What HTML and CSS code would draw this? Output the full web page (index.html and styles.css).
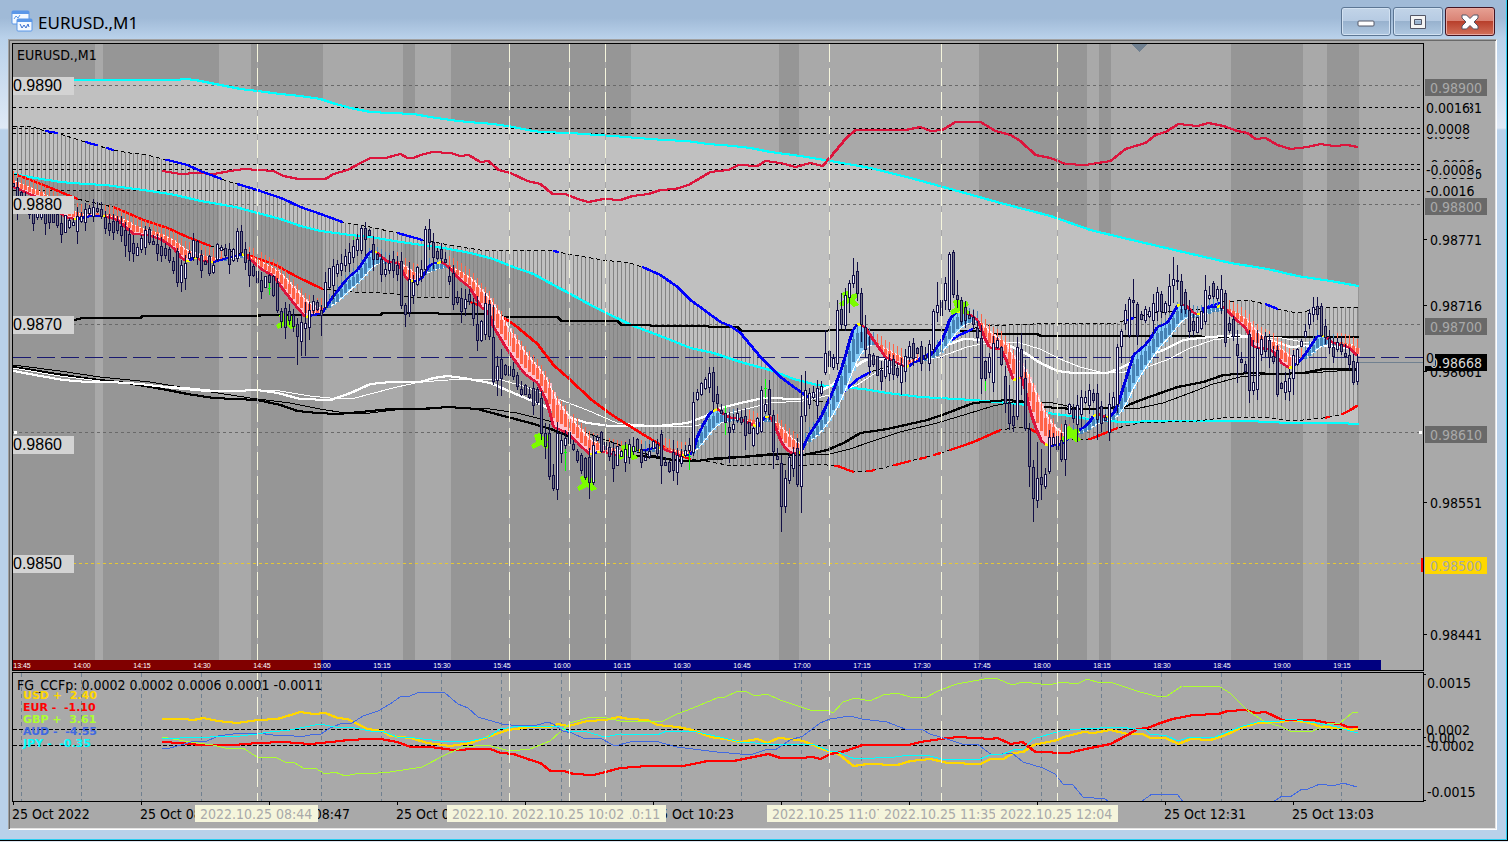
FILE: index.html
```html
<!DOCTYPE html>
<html lang="en">

<head>
    <meta charset="UTF-8">
    <meta name="viewport" content="width=device-width, initial-scale=1.0">
    <title>EURUSD.,M1</title>
    <link rel="stylesheet" href="styles.css">
</head>

<body>
    <main class="window">
        <header class="titlebar">
            <svg class="app-icon" width="22" height="22" viewBox="0 0 22 22">
                <rect x="1" y="1" width="17" height="13" rx="1" fill="#f4f9ff" stroke="#5b97e8" />
                <path d="M1 2.500h17" stroke="#5b97e8" stroke-width="3" />
                <path d="M3 9l2-3 2 2 2-3" fill="none" stroke="#5b97e8" />
                <rect x="6" y="9" width="15" height="12" rx="1" fill="#f4f9ff" stroke="#5b97e8" />
                <path d="M6 10.500h15" stroke="#5b97e8" stroke-width="3" />
                <path d="M9 14l2 4 2-3 2 3 2-4 1 3" fill="none" stroke="#3a6fd0" />
            </svg>
            <h1>EURUSD.,M1</h1>
            <div class="controls">
                <button type="button" class="btn" aria-label="Minimize">
                    <svg width="18" height="18" viewBox="0 0 18 18">
                        <rect x="1" y="8" width="16" height="5" rx="1" fill="#fff" stroke="#535666" />
                    </svg>
                </button>
                <button type="button" class="btn" aria-label="Maximize">
                    <svg width="18" height="18" viewBox="0 0 18 18">
                        <path d="M1.500 2.500h15v13h-15zM5.500 6.500v5h7v-5z" fill="#f4f4f4" fill-rule="evenodd" stroke="#535666" />
                    </svg>
                </button>
                <button type="button" class="btn close" aria-label="Close">
                    <svg width="18" height="18" viewBox="0 0 18 18">
                        <path d="M1 2h4.500L9 5.500 12.500 2H17v3L13 9l4 4v3h-4.500L9 12.500 5.500 16H1v-3l4-4-4-4z" fill="#fff" stroke="#535666" />
                    </svg>
                </button>
            </div>
        </header>

        <section class="client">
            <div class="plot price-plot">
                <svg id="price"></svg>
                <p class="caption">EURUSD.,M1</p>
            </div>
            <svg class="scale" id="price-scale"></svg>

            <div class="plot ccfp-plot">
                <svg id="ccfp"></svg>
                <p class="caption">FG_CCFp: 0.0002 0.0002 0.0006 0.0001 -0.0011</p>
                <ul class="legend">
                    <li class="usd">USD +  2.40</li>
                    <li class="eur">EUR -  -1.10</li>
                    <li class="gbp">GBP +  3.61</li>
                    <li class="aud">AUD -  -4.55</li>
                    <li class="jpy">JPY -  -0.35</li>
                </ul>
            </div>
            <svg class="scale" id="ccfp-scale"></svg>

            <svg class="dates" id="dates"></svg>
        </section>
    </main>
    <script src="chart.js"></script>
</body>

</html>
```
FILE: styles.css
```css
* {
    box-sizing: border-box;
}

body {
    margin: 0;
    padding-bottom: 1px;
    background: #dce6f2;
    font: 14px/16px "DejaVu Sans Condensed", "Noto Sans", sans-serif;
    color: #000;
}

.window {
    display: flex;
    flex-direction: column;
    min-height: calc(100vh - 1px);
    border: solid #000;
    border-width: 0 1px 1px 0;
    box-shadow: inset -1px -1px #2ccdf0;
    background: linear-gradient(#a0bad7 0, #a0bad7 18px, #b9d1ea 38px, #dfe9f6 128px, #b9d1ea 130px);
}

.titlebar {
    display: flex;
    align-items: center;
    height: 39px;
    padding: 0 12px 0 11px;
}

.titlebar h1 {
    flex: 1;
    margin: 0 0 0 5px;
    padding-top: 6px;
    font: 17px/24px "Noto Sans", sans-serif;
}

.app-icon {
    margin-top: 2px;
}

.controls {
    display: flex;
    gap: 2px;
    margin-top: 4px;
}

.btn {
    display: grid;
    place-items: center;
    width: 50px;
    height: 29px;
    padding: 0;
    border: 1px solid #5c7694;
    border-radius: 3px;
    box-shadow: inset 0 0 0 1px #d3e2f2;
    background: linear-gradient(#c2d4e8 0, #b5cae2 50%, #98b2ce 50%, #b0c8e1 100%);
}

.btn.close {
    border-color: #431422;
    box-shadow: inset 0 0 0 1px #e9a79f;
    background: linear-gradient(#e6a093 0, #d98274 48%, #b8402c 50%, #d2705a 100%);
}

/* sunken frame round both charts */
.client {
    flex: 1;
    display: grid;
    grid-template-columns: 1fr 71px;
    grid-template-rows: minmax(628px, 1fr) 130px 26px;
    margin: 0 10px 10px 8px;
    padding: 3px 1px 1px 3px;
    border: 1px solid;
    border-color: #a0a0a0 #fff #fff #a0a0a0;
    box-shadow: inset 1px 1px #696969, inset -1px -1px #e3e3e3;
    background: #a9a9a9;
}

.client svg {
    display: block;
    width: 100%;
    height: 100%;
    overflow: hidden;
    shape-rendering: crispEdges;
}

.plot {
    position: relative;
    min-width: 0;
    border: 1px solid #000;
}

.price-plot {
    margin-bottom: 1px;
}

.plot svg {
    position: absolute;
    top: 0;
    left: 0;
}

.caption {
    position: relative;
    margin: 4px 0 0 4px;
}

.price-plot .caption {
    margin-top: 3px;
}

.legend {
    position: absolute;
    top: 17px;
    left: 10px;
    margin: 0;
    padding: 0;
    list-style: none;
    font: 900 11px/12px "DejaVu Sans", sans-serif;
}

.legend li {
    white-space: pre;
}

.usd { color: #ffd700; }
.eur { color: #f00; }
.gbp { color: #adff2f; }
.aud { color: #4169e1; }
.jpy { color: #0ff; }

.client .dates {
    grid-column: 1 / 3;
}

.level {
    font: 16px "Liberation Sans", sans-serif;
}

.clock {
    font: 7px "Liberation Sans", sans-serif;
    fill: #fff;
    text-anchor: middle;
}
```
FILE: chart.js
```js
const NS = 'http://www.w3.org/2000/svg'

function add(parent, tag, attrs, text) {
    const el = document.createElementNS(NS, tag)
    for (const k in attrs) el.setAttribute(k, attrs[k])
    if (text) el.textContent = text
    parent.appendChild(el)
    return el
}

// all series are stored in window pixels, each panel shifts them to its own corner
function panel(id, x, y) {
    return add(document.getElementById(id), 'g', { transform: `translate(${-x},${-y})` })
}

function pairs(str) {
    return str.trim().split(/\s+/).map(p => p.split(',').map(Number))
}

function at(pts, x) {
    if (x <= pts[0][0]) return pts[0][1]
    for (let i = 1; i < pts.length; i++) {
        const [x0, y0] = pts[i - 1], [x1, y1] = pts[i]
        if (x <= x1) return y0 + (y1 - y0) * (x - x0) / (x1 - x0 || 1)
    }
    return pts[pts.length - 1][1]
}

function line(g, pts, color, width, dash) {
    const a = { points: pts.map(p => p.join()).join(' '), fill: 'none', stroke: color, 'stroke-width': width }
    if (dash) a['stroke-dasharray'] = dash
    add(g, 'polyline', a)
}

// two pixel square pen: second pass one pixel to the right keeps slopes as heavy as flats
function thick(g, pts, color) {
    line(g, pts, color, 2)
    line(g, pts.map(p => [p[0] + 1, p[1]]), color, 2)
}

function part(pts, x0, x1) {
    return [[x0, at(pts, x0)], ...pts.filter(p => p[0] > x0 && p[0] < x1), [x1, at(pts, x1)]]
}

function rect(g, x, y, w, h, fill) {
    add(g, 'rect', { x, y, width: w, height: h, fill })
}

function hline(g, y, color, dash) {
    line(g, [[13, y + .5], [4000, y + .5]], color, 1, dash)
}

const separators = [257, 509, 569, 605, 829, 941, 1057]

/* ---------- price chart ---------- */

const cyanTop = pairs('13,80 175,80 185,79 195,80 205,82 220,85 240,89 257,91 280,94 300,96 320,99 335,104 350,108 370,112 390,113 413,114 430,117 450,120 467,122 493,124 513,127 527,130 540,132 570,133 597,135 613,136 637,138 663,140 687,141 707,144 733,146 750,148 770,152 800,156 830,161 870,168 910,178 950,189 1000,203 1050,216 1090,230 1123,238 1157,246 1187,253 1230,263 1267,269 1297,276 1330,281 1358,286')
const cyanLow = pairs('13,174 35,178 60,182 85,184 105,185 120,187 150,191 175,195 200,201 235,207 257,213 280,219 300,226 320,231 350,235 370,237 400,242 443,248 470,253 493,259 510,266 533,274 553,285 570,294 590,305 610,315 633,326 660,336 690,348 713,353 740,362 773,371 793,379 817,385 840,387 863,389 887,393 920,397 973,400 997,402 1027,405 1047,413 1070,416 1093,420 1123,422 1160,421 1247,421 1290,423 1337,423 1358,424')
const bandUp = pairs('13,126 30,126 45,131 57,133 85,142 113,150 130,153 147,155 167,160 187,165 200,171 213,176 230,182 257,190 283,199 300,207 320,214 342,222 370,227 397,233 422,240 450,245 467,248 487,251 510,250 553,251 573,255 603,260 630,263 642,267 660,275 677,287 690,300 720,322 730,326 740,333 760,357 780,377 807,397 817,402 833,401 857,379 870,372 887,367 913,362 940,348 957,336 970,330 980,326 1033,324 1117,323 1133,318 1153,313 1200,309 1223,302 1247,300 1265,304 1277,309 1297,313 1323,308 1347,307 1359,307')
const bandDn = pairs('13,174 17,175 43,185 77,199 113,207 143,220 167,228 187,237 210,246 227,251 247,255 273,264 297,277 322,289 353,292 380,293 397,294 408,297 457,297 470,302 490,310 513,324 537,344 553,365 570,380 590,399 610,414 637,431 660,445 677,455 690,459 710,462 733,466 773,464 803,466 817,464 837,466 853,472 870,471 887,467 910,461 927,457 947,451 973,442 1000,430 1020,427 1030,429 1045,438 1060,439 1090,439 1117,428 1140,423 1197,421 1230,417 1263,417 1293,421 1323,418 1340,415 1350,410 1359,404')
const flat = pairs('74,320 82,318 140,318 142,316 380,315 382,313 437,313 439,314 493,314 503,317 557,317 561,321 617,321 621,325 678,326 737,327 741,331 917,330 980,331 988,334 1037,334 1040,336 1358,337')
const whiteBold = pairs('13,371 40,376 63,380 87,382 110,382 140,384 173,388 207,391 233,391 257,390 277,393 300,399 330,400 350,393 370,384 390,382 420,382 433,378 447,376 463,378 490,383 513,393 537,403 567,417 587,423 610,426 657,426 687,423 703,417 720,408 740,403 763,398 800,399 817,392 830,386 850,370 863,361 873,358 887,360 907,362 927,356 947,345 963,339 983,340 1007,345 1023,352 1040,363 1057,371 1073,373 1107,373 1120,368 1140,358 1163,350 1183,340 1210,337 1237,335 1270,340 1290,347 1317,345 1353,349')
const whiteThin = pairs('13,368 60,376 100,381 150,385 190,388 210,390 280,391 310,396 330,398 355,398 370,394 397,387 420,382 463,379 497,379 520,385 553,397 587,410 617,423 657,426 690,427 703,424 730,413 770,403 803,401 830,395 857,385 880,370 907,363 940,357 967,347 993,342 1020,343 1040,349 1060,359 1080,367 1100,372 1120,373 1147,367 1167,360 1190,348 1213,340 1237,337 1277,337 1303,342 1353,345')
const blackBold = pairs('13,367 50,373 90,379 127,383 167,390 187,394 213,398 257,400 280,405 297,411 317,413 337,414 360,412 390,409 423,409 447,407 477,409 503,416 530,423 553,430 577,440 603,449 623,455 653,457 680,461 697,461 717,458 740,457 773,454 803,455 827,450 843,443 860,433 887,429 927,420 947,413 973,403 1007,400 1027,402 1043,407 1073,409 1120,408 1143,399 1177,387 1203,382 1223,375 1250,373 1277,374 1303,373 1323,369 1357,369')
const blackThin = pairs('13,365 60,371 100,377 150,382 180,387 205,391 250,398 290,403 320,409 345,413 370,413 403,409 450,407 490,409 517,413 557,423 587,433 617,444 637,452 670,459 690,461 723,459 777,455 830,454 850,449 873,441 900,432 937,423 967,414 993,406 1013,402 1053,403 1077,408 1140,408 1163,403 1190,393 1213,384 1240,377 1270,374 1310,373 1337,371 1359,370')
const crimson = pairs('162,171 180,174 197,173 213,174 230,171 243,169 273,171 283,176 298,179 325,179 333,174 347,170 360,163 370,158 385,158 400,154 407,158 413,158 420,155 432,152 450,153 460,156 468,155 480,162 488,161 498,170 510,173 527,181 540,184 552,194 565,194 577,199 588,202 603,199 620,200 632,196 648,194 660,190 675,189 688,185 710,172 728,170 738,165 757,166 765,161 780,163 795,167 810,163 822,166 830,157 845,139 855,130 905,130 920,127 930,131 942,130 955,122 980,122 995,131 1010,135 1020,141 1035,155 1050,158 1065,164 1085,165 1110,161 1125,149 1145,143 1155,135 1165,132 1178,124 1197,126 1208,123 1223,126 1237,131 1247,133 1255,139 1265,138 1277,145 1290,149 1307,147 1320,144 1333,146 1347,145 1357,147')
const fast = pairs('13,187 27,193 40,199 53,209 67,218 77,219 90,216 103,216 117,220 133,234 147,235 160,239 172,247 182,259 187,262 195,256 200,261 213,262 227,258 242,254 247,257 262,270 273,276 283,290 297,308 305,317 322,313 330,300 347,278 357,270 370,251 375,251 387,262 398,263 405,277 410,282 420,280 430,264 442,262 448,267 460,280 470,288 480,307 488,312 493,327 507,350 523,373 537,383 547,403 553,427 567,433 577,443 590,455 600,451 620,456 630,448 640,451 658,447 670,452 683,456 692,454 698,433 710,412 717,409 727,417 740,419 757,427 767,414 773,422 782,445 790,453 800,454 807,437 820,418 833,390 843,363 852,330 858,323 865,328 873,340 885,357 907,368 912,363 930,356 943,338 950,317 958,311 967,313 977,320 988,347 1002,350 1013,380 1022,377 1030,413 1040,440 1047,446 1060,445 1068,438 1077,431 1087,425 1095,413 1107,418 1115,412 1122,390 1133,355 1147,343 1157,327 1167,323 1178,304 1185,305 1193,313 1200,315 1205,308 1222,306 1233,317 1247,330 1253,347 1272,350 1280,362 1290,369 1302,358 1317,336 1323,335 1333,343 1348,347 1358,357')
const closes = pairs('13,188 20,197 27,205 33,215 45,214 55,220 62,228 70,226 80,220 90,211 100,209 106,225 120,226 127,240 137,252 147,236 155,245 163,250 170,258 177,277 184,272 190,254 195,245 200,262 213,270 218,250 225,252 232,260 240,238 247,262 255,277 263,287 270,280 277,300 283,318 290,315 297,328 303,331 308,320 313,305 320,310 325,286 333,275 343,262 352,253 360,240 368,232 373,250 378,262 384,272 392,262 398,268 403,300 407,315 411,292 418,276 424,264 427,240 432,245 437,256 443,252 448,272 453,296 462,303 470,297 477,330 483,335 488,312 493,370 500,365 507,375 513,372 520,390 530,395 538,398 543,425 548,455 553,470 558,460 562,440 570,440 578,460 585,470 590,465 595,440 605,447 615,460 625,455 635,444 643,460 655,445 662,460 670,470 680,460 690,445 695,400 703,388 710,380 715,390 722,415 730,430 738,415 746,425 753,440 760,420 768,400 775,440 780,480 785,490 790,460 797,460 801,450 805,405 812,395 820,395 827,360 835,365 840,315 848,300 855,275 860,300 866,340 872,360 880,375 890,365 900,375 910,350 920,355 930,355 935,315 942,308 949,270 954,280 960,305 966,315 973,320 980,340 985,372 993,360 998,342 1003,370 1010,405 1018,390 1022,360 1026,420 1031,480 1036,490 1042,475 1048,450 1054,440 1061,440 1067,410 1075,415 1084,400 1092,395 1098,410 1105,420 1112,410 1117,370 1124,320 1132,295 1140,318 1150,315 1158,300 1165,310 1173,285 1180,283 1187,310 1195,330 1203,320 1210,290 1217,295 1222,290 1227,325 1235,330 1241,360 1252,385 1258,350 1265,345 1272,350 1278,390 1285,385 1292,380 1298,355 1306,330 1313,305 1320,310 1326,335 1333,350 1340,345 1350,360 1357,380')

// bars with known extremes: x, high, body top, body bottom, low, rising
const known = [
    [133, 235, 243, 254, 262, 0], [137, 243, 247, 256, 255, 1], [177, 248, 251, 283, 287, 0], [193, 233, 240, 258, 261, 1], [197, 240, 241, 258, 265, 0],
    [237, 228, 231, 259, 262, 1], [241, 225, 231, 253, 256, 0], [277, 278, 283, 311, 313, 0], [281, 308, 311, 322, 328, 0],
    [297, 318, 324, 337, 365, 0], [305, 302, 323, 329, 356, 1], [321, 305, 310, 316, 336, 0], [325, 272, 282, 308, 309, 1],
    [361, 225, 228, 251, 254, 1], [365, 222, 228, 240, 256, 0], [401, 252, 261, 306, 309, 0], [405, 303, 305, 315, 327, 0], [409, 262, 279, 313, 317, 1],
    [425, 226, 229, 270, 275, 1], [429, 219, 229, 243, 250, 0], [453, 265, 273, 305, 310, 0], [477, 296, 324, 341, 351, 0],
    [485, 293, 303, 335, 340, 1], [489, 300, 304, 337, 340, 0], [493, 305, 337, 382, 385, 0], [497, 356, 366, 381, 396, 1],
    [541, 391, 398, 434, 440, 0], [549, 424, 433, 477, 480, 0], [553, 464, 475, 489, 491, 0], [557, 422, 433, 490, 500, 1],
    [589, 448, 457, 483, 499, 0], [593, 435, 445, 483, 485, 1], [661, 430, 434, 466, 484, 0], [673, 440, 452, 471, 481, 0],
    [693, 392, 402, 453, 456, 1], [709, 367, 373, 388, 393, 1], [713, 367, 372, 402, 410, 0], [729, 412, 427, 433, 463, 0],
    [761, 386, 390, 432, 433, 1], [769, 380, 389, 415, 420, 0], [773, 410, 415, 452, 469, 0], [781, 455, 463, 507, 532, 0],
    [785, 470, 478, 507, 513, 1], [789, 453, 457, 481, 484, 1], [797, 438, 448, 485, 487, 0], [801, 375, 416, 487, 513, 1],
    [805, 371, 390, 416, 422, 1], [825, 330, 353, 373, 375, 1], [837, 300, 310, 364, 370, 1], [841, 293, 309, 325, 329, 0],
    [845, 288, 295, 326, 331, 1], [849, 280, 283, 298, 313, 1], [853, 258, 275, 284, 288, 1], [857, 262, 271, 294, 301, 0],
    [861, 288, 293, 325, 342, 0], [865, 315, 327, 350, 358, 0], [869, 336, 354, 367, 375, 0], [933, 309, 311, 350, 354, 1],
    [937, 282, 305, 313, 322, 1], [949, 252, 254, 310, 312, 1], [953, 250, 252, 295, 298, 0], [957, 280, 295, 300, 308, 0],
    [961, 297, 300, 322, 325, 0], [981, 325, 338, 379, 394, 0], [993, 336, 343, 383, 392, 1], [1005, 366, 376, 404, 413, 0],
    [1009, 385, 403, 424, 430, 0], [1013, 404, 416, 426, 432, 0], [1017, 337, 347, 417, 420, 1], [1021, 333, 349, 377, 395, 0],
    [1025, 360, 378, 429, 431, 0], [1029, 423, 429, 467, 487, 0], [1033, 460, 467, 499, 522, 0], [1037, 442, 478, 501, 508, 1],
    [1041, 449, 477, 485, 500, 0], [1045, 468, 474, 487, 489, 1], [1049, 430, 437, 472, 474, 1], [1061, 433, 440, 460, 462, 0],
    [1065, 420, 424, 460, 476, 1], [1097, 384, 393, 420, 440, 0], [1109, 393, 404, 433, 441, 1], [1117, 344, 347, 405, 413, 1],
    [1121, 329, 331, 347, 363, 1], [1129, 297, 299, 336, 338, 1], [1133, 279, 300, 303, 317, 0], [1137, 302, 304, 336, 345, 0],
    [1169, 274, 286, 306, 313, 1], [1173, 257, 279, 286, 303, 1], [1177, 265, 280, 282, 290, 0], [1181, 274, 281, 306, 313, 0],
    [1189, 300, 310, 332, 338, 0], [1205, 275, 290, 322, 325, 1], [1221, 275, 289, 309, 314, 1], [1225, 290, 293, 343, 347, 0],
    [1237, 330, 344, 356, 383, 0], [1249, 330, 334, 391, 403, 0], [1253, 340, 382, 391, 395, 1], [1257, 330, 348, 390, 400, 1],
    [1277, 345, 350, 395, 397, 0], [1293, 350, 355, 379, 395, 1], [1313, 297, 307, 315, 322, 1], [1317, 297, 306, 315, 320, 0],
    [1321, 303, 306, 336, 337, 0], [1353, 354, 361, 383, 385, 0], [1357, 354, 362, 382, 385, 1]
]

function drawPrice() {
    const g = panel('price', 13, 44)

    // session stripes
    for (const [a, b] of [[13, 95], [103, 219], [251, 323], [403, 415], [451, 631], [779, 799], [979, 1087], [1099, 1111], [1231, 1303], [1327, 1359]])
        rect(g, a, 44, b - a, 616, '#969696')

    add(g, 'polygon', { points: [...cyanTop, ...cyanLow.slice().reverse()].map(p => p.join()).join(' '), fill: '#c0c0c0' })

    for (let x = 17; x < 1359; x += 4) {
        const a = Math.round(at(bandUp, x)), b = Math.round(at(bandDn, x))
        rect(g, x, a, 1, b - a, '#848484')
    }

    for (const y of [85, 204, 324, 432]) hline(g, y, '#696969', '3 3')
    hline(g, 563, '#e6c832', '3 3')
    for (const y of [107, 128, 133, 164, 169, 190]) hline(g, y, '#000', '3 3')
    hline(g, 357, '#191970', '18 6')

    thick(g, cyanTop, '#0ff')
    thick(g, cyanLow, '#0ff')
    thick(g, crimson, '#dc143c')
    thick(g, flat, '#000')
    line(g, blackThin, '#000', 1)
    thick(g, blackBold, '#000')
    line(g, whiteThin, '#fff', 1)
    thick(g, whiteBold, '#fff')

    line(g, bandUp, '#000', 1, '4 3')
    line(g, bandDn, '#000', 1, '4 3')
    for (const [a, b] of [[45, 57], [85, 97], [106, 113], [165, 221], [237, 342], [397, 422], [553, 558], [642, 809], [833, 870], [910, 972], [1125, 1133], [1201, 1222], [1265, 1277]])
        thick(g, part(bandUp, a, b), '#00f')
    for (const [a, b] of [[17, 77], [113, 210], [247, 322], [470, 690], [834, 853], [866, 874], [893, 910], [919, 926], [933, 941], [949, 1000], [1030, 1045], [1088, 1117], [1325, 1329], [1341, 1357]])
        thick(g, part(bandDn, a, b), '#f00')

    drawTrend(g)
    drawCandles(g)

    for (const x of separators) {
        line(g, [[x + .5, 44], [x + .5, 660]], '#a9a9a9', 1)
        line(g, [[x + .5, 44], [x + .5, 660]], '#f5f5dc', 1, '18 6')
    }

    // bid line and chart shift mark
    line(g, [[1359, 362.5], [4000, 362.5]], '#708090', 1)
    add(g, 'polygon', { points: '1132,44 1147,44 1139,52', fill: '#708090' })
    rect(g, 14, 431, 3, 3, '#fff')
    rect(g, 1419, 431, 3, 3, '#fff')
    rect(g, 1421, 558, 4, 14, '#f00')

    ;[['0.9890', 77], ['0.9880', 196], ['0.9870', 316], ['0.9860', 436], ['0.9850', 555]].forEach(([t, y]) => {
        rect(g, 13, y, 61, 18, '#d3d3d3')
        add(g, 'text', { x: 13, y: y + 14, class: 'level' }, t)
    })

    // clock strip
    rect(g, 13, 660, 308, 10, '#800000')
    rect(g, 321, 660, 1060, 10, '#000080')
    for (let i = 0; i < 23; i++) {
        const m = 13 * 60 + 45 + i * 15
        add(g, 'text', { x: 22 + i * 60, y: 668, class: 'clock' }, `${Math.floor(m / 60)}:${String(m % 60).padStart(2, '0')}`)
    }
}

function drawTrend(g) {
    let slow = at(fast, 13) - 8
    const bars = []
    for (let x = 13; x <= 1357; x += 4) {
        const f = at(fast, x)
        slow += (f - slow) * .2
        bars.push({ x, f, slow, d: at(fast, x + 2) - at(fast, x - 2) })
    }
    for (const b of bars) {
        const gap = Math.abs(b.slow - b.f)
        rect(g, b.x - 1, Math.min(b.f, b.slow), 4, gap, b.slow > b.f ? '#87cefa' : '#ffc0cb')
    }
    line(g, bars.map(b => [b.x, b.slow]), '#fff', 1)
    for (const b of bars) {
        const up = b.slow > b.f
        const gap = Math.abs(b.slow - b.f)
        const dir = up ? 1 : -1
        const a = b.f + dir * gap * .25, c = b.f + dir * (gap * .75 + 2)
        const top = Math.round(Math.min(a, c)), h = Math.round(Math.abs(c - a))
        rect(g, b.x - 1, top, 3, h, up ? '#4682b4' : '#ff6347')
        rect(g, b.x, top - 9, 1, 9, up ? '#4682b4' : '#ff6347')
    }
    for (let i = 1; i < bars.length; i++) {
        const p = bars[i - 1], b = bars[i], dy = b.f - p.f
        const turn = (p.d > 0) !== (b.d > 0)
        thick(g, [[p.x, p.f], [b.x, b.f]], turn ? '#ff0' : dy > 0 ? '#dc143c' : '#0000e0')
    }
}

function drawCandles(g) {
    for (const [x, y] of [[287, 320], [542, 440], [588, 482], [629, 451], [850, 298], [961, 306], [1072, 433]])
        add(g, 'path', { d: `M${x - 8} ${y - 5}l5 -2 4 4 5 -2 2 4-4 3 5 5-5 2-5-4-4 2-4 2-2-4 5-3z`, fill: '#7cfc00' })
    for (const [x, a, b] of [[269, 281, 295], [353, 237, 261], [565, 433, 471], [689, 443, 470], [725, 406, 435], [765, 379, 398], [757, 418, 435], [901, 369, 390], [985, 366, 391]]) {
        rect(g, x, a, 1, b - a, '#0f0')
        rect(g, x - 1, (a + b) >> 1, 3, 1, '#0f0')
    }
    const byX = new Map(known.map(k => [k[0], k]))
    for (let x = 13, i = 0; x <= 1357; x += 4, i++) {
        let k = byX.get(x)
        if (!k) {
            const n = Math.abs(Math.sin(i * 12.9898) * 43758.5453) % 1
            const m = Math.abs(Math.sin(i * 78.233) * 9631.371) % 1
            const y = Math.round(at(closes, x) + (n - .5) * 6)
            const half = 2 + Math.round(m * 8)
            k = [x, y - half - Math.round(n * 10), y - half, y + half, y + half + Math.round(m * n * 18), at(closes, x + 4) < at(closes, x - 4) ? 1 : 0]
        }
        const [, hi, top, bottom, lo, rising] = k
        rect(g, x, hi, 1, Math.max(lo, bottom) - hi, '#120f45')
        rect(g, x - 1, top, 3, bottom - top, '#120f45')
        if (bottom - top > 2) rect(g, x, top + 1, 1, bottom - top - 2, rising ? '#f0f0ff' : '#77778a')
    }
}

/* ---------- currency strength ---------- */

const usd = pairs('162,719 183,719 193,720 203,718 217,721 237,723 257,720 277,719 300,712 313,714 325,713 337,718 347,719 367,729 382,731 390,736 410,738 427,743 450,746 470,743 490,736 507,730 530,727 550,727 557,724 568,726 587,721 605,720 618,717 628,719 647,720 657,725 677,727 692,730 710,737 730,740 740,742 757,739 767,743 778,738 790,739 803,741 827,751 838,754 853,766 867,764 897,765 910,761 930,759 947,763 980,764 990,759 1003,759 1013,753 1023,752 1033,745 1057,740 1063,737 1083,732 1093,733 1110,730 1127,734 1142,734 1150,738 1165,738 1178,744 1190,739 1210,740 1223,736 1240,728 1257,723 1280,722 1290,720 1310,723 1320,727 1340,728 1350,730 1357,729')
const eur = pairs('162,742 180,743 200,745 233,745 257,743 283,742 310,744 340,741 347,740 370,739 380,739 397,742 410,747 430,747 453,750 477,749 490,749 500,753 513,754 530,760 540,763 550,771 563,771 573,774 593,775 605,772 620,768 647,766 683,766 707,761 733,761 768,754 780,758 800,758 812,757 820,759 830,754 845,751 862,745 908,745 920,742 940,739 957,737 975,738 990,739 997,738 1010,744 1022,742 1035,752 1068,753 1085,749 1110,744 1127,735 1137,729 1147,728 1160,723 1172,719 1193,715 1218,714 1227,711 1245,710 1255,713 1265,712 1282,720 1313,720 1327,723 1340,724 1347,727 1357,727')
const gbp = pairs('162,737 190,742 213,745 225,748 243,748 257,757 275,757 285,762 293,762 305,769 315,768 325,774 335,772 345,776 360,773 378,773 390,772 422,767 447,754 463,747 487,745 510,751 530,749 550,741 570,723 590,717 607,718 620,721 663,721 677,714 693,708 717,698 725,697 738,691 745,691 755,696 767,694 780,700 810,710 828,710 833,713 843,702 855,698 870,701 883,695 897,693 910,697 925,698 940,690 957,684 990,678 998,679 1012,685 1023,682 1050,685 1060,682 1077,684 1087,679 1100,683 1110,682 1140,692 1160,697 1167,696 1182,686 1220,687 1230,693 1247,710 1265,722 1282,727 1292,732 1313,731 1327,724 1340,723 1352,713 1358,712')
const aud = pairs('162,749 170,748 195,741 205,742 218,736 240,733 258,733 273,735 287,735 300,737 310,735 321,734 330,728 340,724 352,723 363,716 378,711 390,704 400,697 410,696 417,693 430,692 445,693 458,704 468,708 478,717 502,724 520,726 537,725 548,722 553,724 563,731 572,733 585,739 600,738 615,746 630,742 655,741 677,747 717,752 740,754 753,754 768,749 775,750 790,740 803,736 820,723 830,719 850,716 862,719 887,722 905,729 923,730 930,734 950,740 962,744 977,744 992,755 1012,753 1023,762 1043,768 1055,774 1063,784 1073,785 1083,797 1105,799 1108,801 1142,801 1152,794 1178,795 1183,802 1273,802 1282,796 1290,797 1302,789 1308,789 1320,784 1333,786 1343,783 1357,787')
const jpy = pairs('162,738 180,738 190,737 200,738 210,737 240,736 257,734 270,732 290,730 300,728 320,724 335,727 350,727 370,731 382,731 397,737 415,738 440,741 470,741 488,737 500,729 520,726 550,726 560,727 568,731 587,732 605,737 620,734 657,735 667,731 697,732 720,737 740,742 770,744 800,744 815,745 830,751 838,752 855,759 895,757 910,755 930,756 942,759 980,759 990,755 1003,754 1013,750 1023,749 1033,739 1060,731 1080,729 1100,728 1120,727 1135,729 1145,729 1150,734 1167,736 1178,741 1190,737 1215,737 1230,731 1240,727 1257,722 1280,721 1290,719 1310,722 1330,725 1350,731 1358,733')

function drawCcfp() {
    const g = panel('ccfp', 13, 673)
    for (let x = 21; x < 1360; x += 60) line(g, [[x + .5, 673], [x + .5, 801]], '#708090', 1, '4 3')
    hline(g, 729, '#000', '4 2')
    hline(g, 745, '#000', '4 2')
    thick(g, usd, '#ffd700')
    thick(g, eur, '#f00')
    line(g, gbp, '#adff2f', 1)
    line(g, aud, '#4169e1', 1)
    line(g, jpy, '#0ff', 1)
    for (const x of separators) line(g, [[x + .5, 673], [x + .5, 801]], '#f5f5dc', 1, '18 6')
}

/* ---------- scales ---------- */

// y is the middle of the label
function label(g, x, y, text, box, color) {
    if (box) rect(g, 1425, y - 9, 62, 17, box)
    add(g, 'text', { x, y: y + 5, fill: color || '#000' }, text)
}

function level(g, y, text, w) {
    rect(g, 1424, y - 8, w, 16, '#a9a9a9')
    label(g, 1426, y, text)
}

function drawScales() {
    let g = panel('price-scale', 1424, 43)
    ;[[108, '0.98881'], [174, '0.98826'], [240, '0.98771'], [306, '0.98716'], [372, '0.98661'], [503, '0.98551'], [635, '0.98441']].forEach(([y, t]) => {
        rect(g, 1424, y - 1, 3, 1, '#000')
        label(g, 1430, y, t)
    })
    level(g, 134, '0.0006', 46)
    level(g, 129, '0.0008', 46)
    level(g, 165, '-0.0006', 52)
    level(g, 170, '-0.0008', 52)
    level(g, 108, '0.0016', 46)
    level(g, 191, '-0.0016', 52)
    label(g, 1430, 88, '0.98900', '#696969', '#a9a9a9')
    label(g, 1430, 207, '0.98800', '#696969', '#a9a9a9')
    label(g, 1430, 327, '0.98700', '#696969', '#a9a9a9')
    label(g, 1430, 435, '0.98610', '#696969', '#a9a9a9')
    label(g, 1430, 566, '0.98500', '#ffd700', '#a9a9a9')
    label(g, 1430, 363, '0.98668', '#000', '#d8d8d8')
    rect(g, 1424, 351, 11, 15, '#a9a9a9')
    label(g, 1426, 358, '0')

    g = panel('ccfp-scale', 1424, 672)
    for (const y of [674, 737, 800]) rect(g, 1424, y, 2, 1, '#000')
    label(g, 1427, 683, '0.0015')
    label(g, 1427, 738, '0.00')
    label(g, 1426, 730, '0.0002')
    label(g, 1426, 746, '-0.0002')
    label(g, 1427, 792, '-0.0015')

    g = panel('dates', 12, 802)
    ;['2022', '08:15', '08:47', '09:19', '09:51', '10:23', '10:55', '11:27', '11:59', '12:31', '13:03'].forEach((t, i) => {
        rect(g, 13 + i * 128, 802, 1, 3, '#000')
        add(g, 'text', { x: 12 + i * 128, y: 819 }, '25 Oct ' + t)
    })
    ;[[257, '08:44'], [509, '09:56'], [605, '10:11'], [569, '10:02'], [829, '11:07'], [941, '11:35'], [1057, '12:04']].forEach(([x, t]) => {
        rect(g, x - 62, 805, 123, 17, '#f5f5dc')
        add(g, 'text', { x: x - 57, y: 819, fill: '#a9a9a9' }, '2022.10.25 ' + t)
    })
}

drawPrice()
drawCcfp()
drawScales()
```
